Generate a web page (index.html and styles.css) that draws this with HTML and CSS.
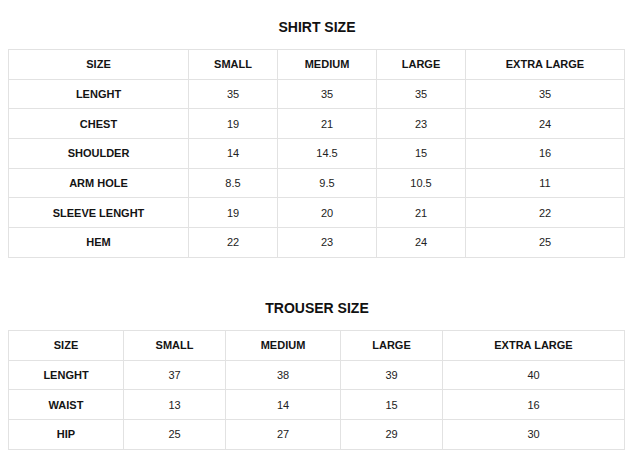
FILE: index.html
```html
<!DOCTYPE html>
<html>
<head>
<meta charset="utf-8">
<link rel="stylesheet" href="styles.css">
</head>
<body>
<section class="chart">
  <h2 class="chart-title">SHIRT SIZE</h2>
  <table class="size-table">
    <colgroup>
      <col class="c-shirt-1"><col class="c-shirt-2"><col class="c-shirt-3"><col class="c-shirt-4"><col class="c-shirt-5">
    </colgroup>
    <tr class="head"><th>SIZE</th><th>SMALL</th><th>MEDIUM</th><th>LARGE</th><th>EXTRA LARGE</th></tr>
    <tr><th>LENGHT</th><td>35</td><td>35</td><td>35</td><td>35</td></tr>
    <tr><th>CHEST</th><td>19</td><td>21</td><td>23</td><td>24</td></tr>
    <tr><th>SHOULDER</th><td>14</td><td>14.5</td><td>15</td><td>16</td></tr>
    <tr><th>ARM HOLE</th><td>8.5</td><td>9.5</td><td>10.5</td><td>11</td></tr>
    <tr><th>SLEEVE LENGHT</th><td>19</td><td>20</td><td>21</td><td>22</td></tr>
    <tr><th>HEM</th><td>22</td><td>23</td><td>24</td><td>25</td></tr>
  </table>
</section>
<section class="chart chart-second">
  <h2 class="chart-title">TROUSER SIZE</h2>
  <table class="size-table">
    <colgroup>
      <col class="c-tr-1"><col class="c-tr-2"><col class="c-tr-3"><col class="c-tr-4"><col class="c-tr-5">
    </colgroup>
    <tr class="head"><th>SIZE</th><th>SMALL</th><th>MEDIUM</th><th>LARGE</th><th>EXTRA LARGE</th></tr>
    <tr><th>LENGHT</th><td>37</td><td>38</td><td>39</td><td>40</td></tr>
    <tr><th>WAIST</th><td>13</td><td>14</td><td>15</td><td>16</td></tr>
    <tr><th>HIP</th><td>25</td><td>27</td><td>29</td><td>30</td></tr>
  </table>
</section>
</body>
</html>
```
FILE: styles.css
```css
html, body {
  margin: 0;
  background: #ffffff;
}
body {
  padding: 9px 8px 0 8px;
  font-family: "Liberation Sans", Arial, sans-serif;
  color: #1a1a1a;
}
.chart-title {
  margin: 8px 0 12px;
  font-size: 14px;
  line-height: 20px;
  font-weight: bold;
  text-align: center;
  color: #111;
}
.chart-second {
  margin-top: 40px;
}
.size-table {
  width: 616px;
  table-layout: fixed;
  border-collapse: collapse;
}
.size-table th,
.size-table td {
  height: 28.7px;
  padding: 0;
  border: 1px solid #e2e2e2;
  text-align: center;
  vertical-align: middle;
  font-size: 11px;
  line-height: 14px;
}
.size-table th {
  font-weight: bold;
  color: #141414;
}
.size-table td {
  font-weight: normal;
  color: #222;
}
.c-shirt-1 { width: 180px; }
.c-shirt-2 { width: 89px; }
.c-shirt-3 { width: 99px; }
.c-shirt-4 { width: 89px; }
.c-shirt-5 { width: 159px; }
.c-tr-1 { width: 115px; }
.c-tr-2 { width: 102px; }
.c-tr-3 { width: 115px; }
.c-tr-4 { width: 102px; }
.c-tr-5 { width: 182px; }
```
